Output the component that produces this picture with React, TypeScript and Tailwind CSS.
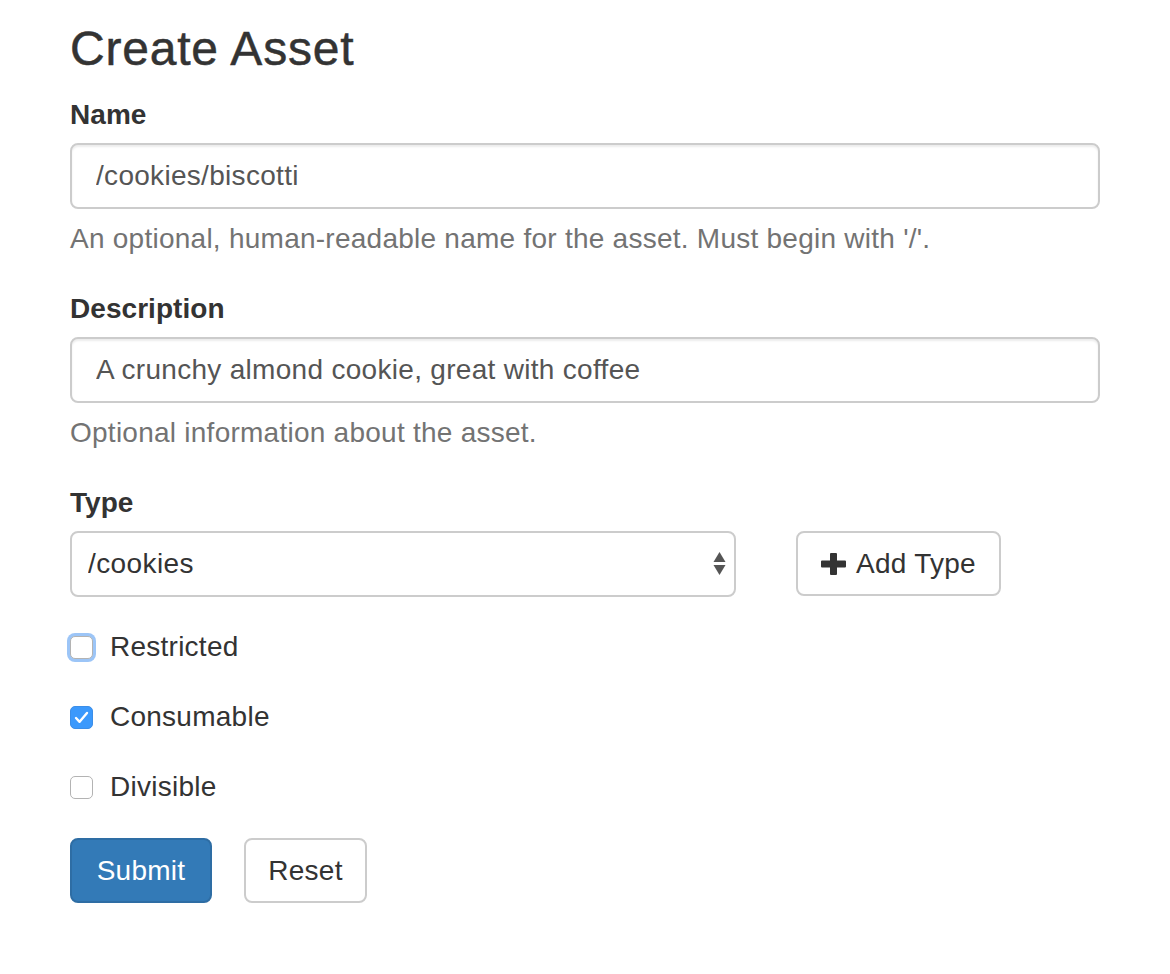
import React, { useState } from 'react';

const CheckRow: React.FC<{
  label: string;
  checked: boolean;
  focused?: boolean;
  onToggle: () => void;
}> = ({ label, checked, focused, onToggle }) => (
  <label className="flex h-[40px] cursor-pointer items-center" onClick={onToggle}>
    <span
      className={`flex h-[23px] w-[23px] items-center justify-center rounded-[5px] ${
        checked
          ? 'bg-[#3b99fc] border border-[#3b8ee8]'
          : 'bg-white border border-[#b3b3b3]'
      } ${focused ? 'shadow-[0_0_0_3px_#9cc5f7]' : ''}`}
    >
      {checked && (
        <svg width="15" height="13" viewBox="0 0 15 13" fill="none">
          <path d="M2 7 L5.6 10.8 L13 2" stroke="#fff" strokeWidth="2.4" strokeLinecap="round" strokeLinejoin="round" />
        </svg>
      )}
    </span>
    <span className="ml-[17px] text-[28px] text-[#333]">{label}</span>
  </label>
);

const App: React.FC = () => {
  const [name, setName] = useState('/cookies/biscotti');
  const [description, setDescription] = useState('A crunchy almond cookie, great with coffee');
  const [type, setType] = useState('/cookies');
  const [restricted, setRestricted] = useState(false);
  const [consumable, setConsumable] = useState(true);
  const [divisible, setDivisible] = useState(false);

  const inputCls =
    'block h-[66px] w-full rounded-[8px] border-2 border-[#ccc] bg-white px-[24px] text-[28px] tracking-[0.3px] text-[#555] shadow-[inset_0_2px_2px_rgba(0,0,0,0.075)] outline-none';
  const labelCls = 'mb-[8px] block text-[28px] leading-[40px] font-bold tracking-[0.05px]';

  return (
    <div className="min-h-screen bg-white px-[70px] pt-[23px] font-['Liberation_Sans',Arial,sans-serif] tracking-[0.25px] text-[#333]">
      <h3 className="mb-[20px] text-[48px] leading-[52px] font-medium tracking-[0.8px] [-webkit-text-stroke:0.5px_#333]">
        Create Asset
      </h3>

      <form onSubmit={(e) => e.preventDefault()}>
        {/* Name */}
        <div className="mb-[30px]">
          <label className={labelCls}>Name</label>
          <input className={inputCls} value={name} onChange={(e) => setName(e.target.value)} />
          <p className="mt-[10px] text-[28px] leading-[40px] text-[#737373]">
            An optional, human-readable name for the asset. Must begin with '/'.
          </p>
        </div>

        {/* Description */}
        <div className="mb-[30px]">
          <label className={labelCls}>Description</label>
          <input className={inputCls} value={description} onChange={(e) => setDescription(e.target.value)} />
          <p className="mt-[10px] text-[28px] leading-[40px] text-[#737373]">Optional information about the asset.</p>
        </div>

        {/* Type */}
        <div className="mb-[30px]">
          <label className={labelCls}>Type</label>
          <div className="flex items-start">
            <div className="relative w-[666px]">
              <select
                value={type}
                onChange={(e) => setType(e.target.value)}
                className="block h-[66px] w-full appearance-none rounded-[8px] border-2 border-[#ccc] bg-white pl-[16px] text-[28px] tracking-[0.4px] text-[#333] outline-none"
              >
                <option>/cookies</option>
                <option>/cakes</option>
              </select>
              <svg
                className="pointer-events-none absolute right-[10px] top-[21px]"
                width="13"
                height="24"
                viewBox="0 0 13 24"
              >
                <path d="M6.5 0 L12.5 10 L0.5 10 Z" fill="#555" />
                <path d="M0.5 13 L12.5 13 L6.5 23 Z" fill="#555" />
              </svg>
            </div>
            <button
              type="button"
              className="ml-[60px] flex h-[65px] w-[205px] items-center justify-center gap-[10px] rounded-[8px] border-2 border-[#ccc] bg-white text-[28px] text-[#333]"
            >
              <svg width="25" height="22" viewBox="0 0 25 22">
                <path
                  d="M9 1 Q9 0 10 0 L15 0 Q16 0 16 1 L16 7.5 L24 7.5 Q25 7.5 25 8.5 L25 13.5 Q25 14.5 24 14.5 L16 14.5 L16 21 Q16 22 15 22 L10 22 Q9 22 9 21 L9 14.5 L1 14.5 Q0 14.5 0 13.5 L0 8.5 Q0 7.5 1 7.5 L9 7.5 Z"
                  fill="#333"
                />
              </svg>
              Add Type
            </button>
          </div>
        </div>

        {/* Flags */}
        <div className="flex flex-col gap-[30px]">
          <CheckRow label="Restricted" checked={restricted} focused onToggle={() => setRestricted(!restricted)} />
          <CheckRow label="Consumable" checked={consumable} onToggle={() => setConsumable(!consumable)} />
          <CheckRow label="Divisible" checked={divisible} onToggle={() => setDivisible(!divisible)} />
        </div>

        <div className="mt-[31px] flex gap-[32px]">
          <button
            type="submit"
            className="h-[65px] w-[142px] rounded-[8px] border-2 border-[#2e6da4] bg-[#337ab7] text-[28px] text-white"
          >
            Submit
          </button>
          <button
            type="reset"
            className="h-[65px] w-[123px] rounded-[8px] border-2 border-[#ccc] bg-white text-[28px] text-[#333]"
          >
            Reset
          </button>
        </div>
      </form>
    </div>
  );
};

export default App;
